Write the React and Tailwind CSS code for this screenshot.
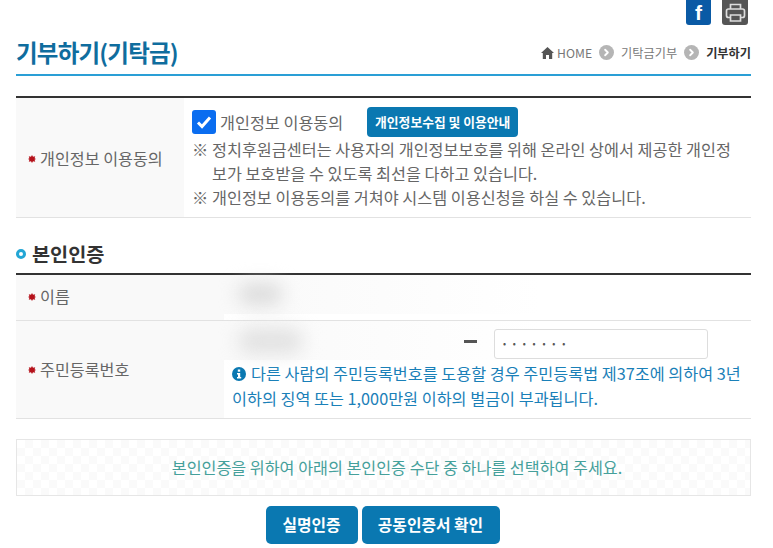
import { ChevronRight } from 'lucide-react'

function Star() {
  return (
    <svg width="8" height="8" viewBox="0 0 8 8" className="mr-[4px] shrink-0">
      <path d="M4 0l1 1.8 2.2-.6-.6 2 1.4.8-1.4.8.6 2L5 6.200 4 8 3 6.200l-2.200.6.6-2L0 4l1.400-.8-.6-2L3 1.800z" fill="#b5121b" />
    </svg>
  )
}

function Crumb() {
  return (
    <span className="mx-[7px] flex h-[15px] w-[15px] items-center justify-center rounded-full bg-[#b5b5b5]">
      <ChevronRight size={11} strokeWidth={4} className="text-white" />
    </span>
  )
}

export default function App() {
  return (
    <div className="w-[773px] h-[548px] overflow-hidden bg-white pl-[16px] pr-[22px] font-['Noto_Sans_CJK_KR','Noto_Sans',sans-serif] text-[#666]">
      <div className="flex h-[25px] justify-end gap-[11px] pr-[3px]">
        <div className="flex h-[25px] w-[25px] items-center justify-center rounded-b-[3px] bg-[#0a5aa5] font-['Liberation_Sans',sans-serif] text-[21px] font-bold text-white">f</div>
        <div className="flex h-[25px] w-[26px] items-center justify-center rounded-b-[3px] bg-[#555]">
          <svg width="21" height="20" viewBox="0 0 21 20" fill="none" stroke="#ddd" strokeWidth="1.700">
            <path d="M5.500 6V1.500h10V6" />
            <rect x="1.500" y="6" width="18" height="8.500" rx="2" />
            <path d="M5.500 12h10v6h-10z" fill="#555" />
          </svg>
        </div>
      </div>

      <div className="flex h-[51px] items-center justify-between border-b-2 border-[#2a9fd6] pt-[7px]">
        <h1 className="text-[23.5px] font-bold tracking-[-0.8px] text-[#0f6d9e]">기부하기(기탁금)</h1>
        <div className="flex items-center text-[12.2px] text-[#777]">
          <svg width="13" height="12" viewBox="0 0 13 12" className="mr-[3px]">
            <path d="M6.500 0L13 6h-1.800v6H8V8H5v4H1.800V6H0z" fill="#555" />
          </svg>
          <span>HOME</span>
          <Crumb />
          <span>기탁금기부</span>
          <Crumb />
          <span className="font-bold text-[#333]">기부하기</span>
        </div>
      </div>

      <div className="mt-[20px] flex h-[122px] border-t-2 border-b border-t-[#333] border-b-[#e2e2e2]">
        <div className="flex w-[168px] items-center bg-[#f9f9f9] pl-[12px] pt-[2px] text-[16.2px]">
          <Star />개인정보 이용동의
        </div>
        <div className="flex-1 pl-[8px] pt-[11px] text-[16.25px] leading-[24px]">
          <div className="flex h-[26px] items-center">
            <span className="flex h-[24px] w-[24px] items-center justify-center rounded-[3px] bg-[#0a6df0]">
              <svg width="18" height="18" viewBox="0 0 18 18"><path d="M3 9.500l4 4 8-9" fill="none" stroke="#fff" strokeWidth="3" /></svg>
            </span>
            <span className="ml-[4px]">개인정보 이용동의</span>
            <button className="ml-[24px] h-[30px] w-[151px] rounded-[4px] bg-[#0a78b1] text-[12.8px] font-bold text-white">개인정보수집 및 이용안내</button>
          </div>
          <div className="mt-[2px] flex">
            <span className="w-[20px] shrink-0">※</span>
            <span className="whitespace-nowrap">정치후원금센터는 사용자의 개인정보보호를 위해 온라인 상에서 제공한 개인정<br />보가 보호받을 수 있도록 최선을 다하고 있습니다.</span>
          </div>
          <div className="flex">
            <span className="w-[20px] shrink-0">※</span>
            <span className="whitespace-nowrap">개인정보 이용동의를 거쳐야 시스템 이용신청을 하실 수 있습니다.</span>
          </div>
        </div>
      </div>

      <div className="mt-[19px] flex h-[33px] items-center">
        <span className="mr-[6px] h-[10px] w-[10px] rounded-full border-[3px] border-[#23a6d5]"></span>
        <h2 className="text-[19.700px] font-bold text-[#333]">본인인증</h2>
      </div>

      <div className="mt-[3px] border-t-2 border-[#333]">
        <div className="flex h-[46px] border-b border-[#e2e2e2]">
          <div className="flex w-[208px] items-center bg-[#f9f9f9] pb-[2px] pl-[12px] text-[16.2px]">
            <Star />이름
          </div>
          <div className="flex-1">
            <div className="h-[39px] bg-gradient-to-r from-[#f9f9f9] to-white to-[60%] pl-[14px] pt-[8px]">
              <div className="h-[22px] w-[45px] rounded-full bg-[#dcdcdc] blur-[9px]"></div>
            </div>
          </div>
        </div>
        <div className="flex h-[98px] border-b border-[#e2e2e2]">
          <div className="flex w-[208px] items-center bg-[#f9f9f9] pl-[12px] text-[16.2px]">
            <Star />주민등록번호
          </div>
          <div className="flex-1">
            <div className="flex h-[39px] items-center bg-gradient-to-r from-[#f9f9f9] to-white to-[60%] pl-[14px]">
              <div className="h-[26px] w-[65px] rounded-full bg-[#e2e2e2] blur-[9px]"></div>
              <span className="ml-[161px] mt-[2px] h-[3px] w-[13px] bg-[#555]"></span>
              <div className="ml-[17px] mt-[6px] flex h-[30px] w-[214px] items-center rounded-[3px] border border-[#ddd] bg-white pl-[8px] text-[9px] tracking-[6.800px] text-[#555]">•••••••</div>
            </div>
            <div className="pl-[8px] pt-[1px] whitespace-nowrap text-[16.250px] leading-[25px] text-[#1a80b8]">
              <svg width="14" height="14" viewBox="0 0 14 14" className="mr-[5px] inline align-[-1px]">
                <circle cx="7" cy="7" r="7" fill="#0a78b1" />
                <rect x="5.800" y="2.500" width="2.400" height="2.200" fill="#fff" />
                <path d="M5 6h3.200v4h1v1.500H5V10h1V7.500H5z" fill="#fff" />
              </svg>
              다른 사람의 주민등록번호를 도용할 경우 주민등록법 제37조에 의하여 3년<br />이하의 징역 또는 1,000만원 이하의 벌금이 부과됩니다.
            </div>
          </div>
        </div>
      </div>

      <div className="mt-[20px] flex h-[57px] items-center justify-center border border-[#e6e6e6] bg-[repeating-conic-gradient(#fafafa_0_25%,#ffffff_0_50%)] bg-[length:16px_16px] pl-[27px] text-[16.200px] text-[#45a09b]">
        본인인증을 위하여 아래의 본인인증 수단 중 하나를 선택하여 주세요.
      </div>

      <div className="mt-[10px] flex justify-center gap-[4px] pr-[2px]">
        <button className="h-[38px] w-[92px] rounded-[5px] bg-[#0a78b1] text-[15.800px] font-bold text-white">실명인증</button>
        <button className="h-[38px] w-[138px] rounded-[5px] bg-[#0a78b1] text-[15.800px] font-bold text-white">공동인증서 확인</button>
      </div>
    </div>
  )
}
